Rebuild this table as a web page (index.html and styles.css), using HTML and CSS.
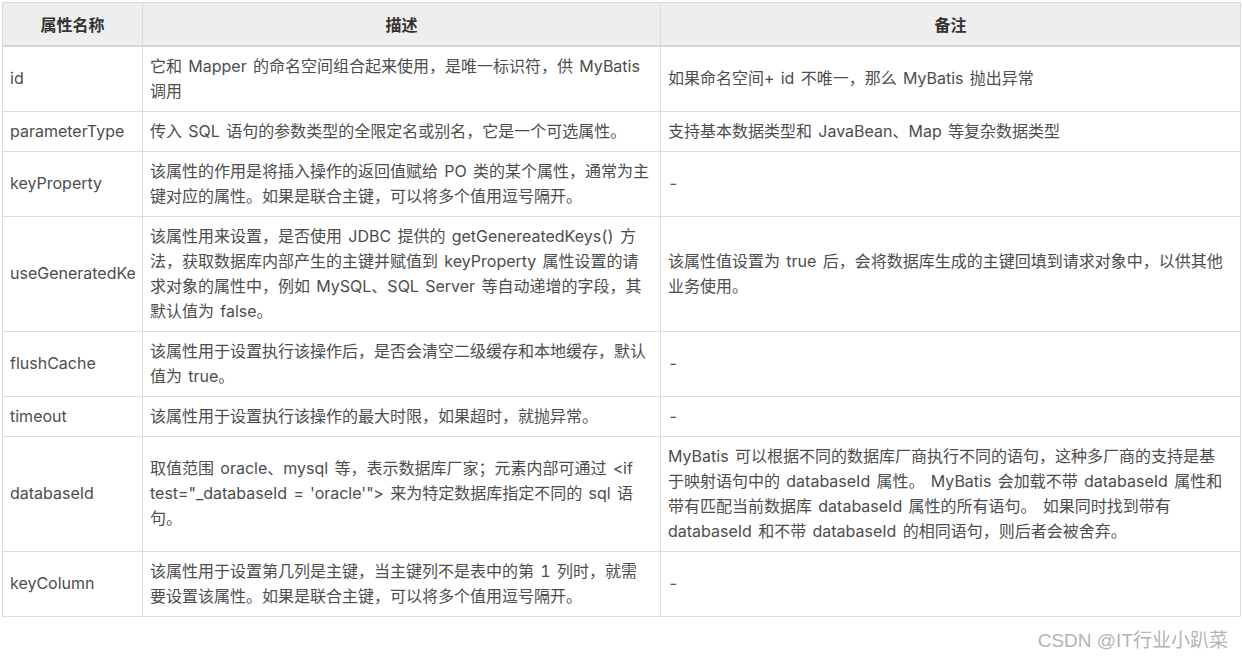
FILE: index.html
```html
<!DOCTYPE html>
<html lang="zh">
<head>
<meta charset="utf-8">
<title>MyBatis insert 属性</title>
<link rel="stylesheet" href="styles.css">
</head>
<body>
<div class="page">
  <table class="attr-table">
    <colgroup>
      <col class="c-name">
      <col class="c-desc">
      <col class="c-note">
    </colgroup>
    <thead>
      <tr><th>属性名称</th><th>描述</th><th>备注</th></tr>
    </thead>
    <tbody>
      <tr>
        <td><div class="clip">id</div></td>
        <td class="desc">它和 Mapper 的命名空间组合起来使用，是唯一标识符，供 MyBatis 调用</td>
        <td class="note">如果命名空间+ id 不唯一，那么 MyBatis 抛出异常</td>
      </tr>
      <tr>
        <td><div class="clip">parameterType</div></td>
        <td class="desc">传入 SQL 语句的参数类型的全限定名或别名，它是一个可选属性。</td>
        <td class="note">支持基本数据类型和 JavaBean、Map 等复杂数据类型</td>
      </tr>
      <tr>
        <td><div class="clip">keyProperty</div></td>
        <td class="desc">该属性的作用是将插入操作的返回值赋给 PO 类的某个属性，通常为主键对应的属性。如果是联合主键，可以将多个值用逗号隔开。</td>
        <td class="note">-</td>
      </tr>
      <tr>
        <td><div class="clip">useGeneratedKeys</div></td>
        <td class="desc">该属性用来设置，是否使用 JDBC 提供的 getGenereatedKeys() 方法，获取数据库内部产生的主键并赋值到 keyProperty 属性设置的请求对象的属性中，例如 MySQL、SQL Server 等自动递增的字段，其默认值为 false。</td>
        <td class="note">该属性值设置为 true 后，会将数据库生成的主键回填到请求对象中，以供其他业务使用。</td>
      </tr>
      <tr>
        <td><div class="clip">flushCache</div></td>
        <td class="desc">该属性用于设置执行该操作后，是否会清空二级缓存和本地缓存，默认值为 true。</td>
        <td class="note">-</td>
      </tr>
      <tr>
        <td><div class="clip">timeout</div></td>
        <td class="desc">该属性用于设置执行该操作的最大时限，如果超时，就抛异常。</td>
        <td class="note">-</td>
      </tr>
      <tr>
        <td><div class="clip">databaseId</div></td>
        <td class="desc">取值范围 oracle、mysql 等，表示数据库厂家；元素内部可通过 &lt;if test="_databaseId = 'oracle'"&gt; 来为特定数据库指定不同的 sql 语句。</td>
        <td class="note">MyBatis 可以根据不同的数据库厂商执行不同的语句，这种多厂商的支持是基于映射语句中的 databaseId 属性。 MyBatis 会加载不带 databaseId 属性和带有匹配当前数据库 databaseId 属性的所有语句。 如果同时找到带有 databaseId 和不带 databaseId 的相同语句，则后者会被舍弃。</td>
      </tr>
      <tr>
        <td><div class="clip">keyColumn</div></td>
        <td class="desc">该属性用于设置第几列是主键，当主键列不是表中的第 1 列时，就需要设置该属性。如果是联合主键，可以将多个值用逗号隔开。</td>
        <td class="note">-</td>
      </tr>
    </tbody>
  </table>
  <div class="watermark">CSDN @IT行业小趴菜</div>
</div>
</body>
</html>
```

FILE: styles.css
```css
html, body {
  margin: 0;
  padding: 0;
  background: #ffffff;
}

.page {
  padding: 2px 2px 0 2px;
  font-family: "Inter", "Noto Sans CJK SC", sans-serif;
  font-size: 16px;
  color: #4d4d4d;
}

.attr-table {
  width: 1238px;
  table-layout: fixed;
  border-collapse: collapse;
  border: 1px solid #d0d0d0;
}

.c-name { width: 140px; }
.c-desc { width: 518px; }
.c-note { width: 580px; }

.attr-table th {
  height: 43px;
  box-sizing: border-box;
  padding: 0 7px;
  background: #eeeeee;
  color: #333333;
  font-weight: bold;
  text-align: center;
  vertical-align: middle;
  border: 1px solid #dcdcdc;
  border-bottom: 2px solid #d6d6d6;
}

.attr-table td {
  padding: 7px 7px;
  line-height: 25px;
  vertical-align: middle;
  text-align: left;
  border: 1px solid #dcdcdc;
  word-spacing: 2px;
  font-variant-numeric: tabular-nums;
}

.attr-table td.desc {
  padding-right: 10px;
}

.attr-table td.note {
  padding-right: 15px;
}

.clip {
  overflow: hidden;
  white-space: nowrap;
}

.watermark {
  text-align: right;
  padding: 12px 12px 0 0;
  font-family: "Liberation Sans", "Noto Sans CJK SC", sans-serif;
  font-size: 19px;
  line-height: 24px;
  color: #b4b4b4;
}
```
